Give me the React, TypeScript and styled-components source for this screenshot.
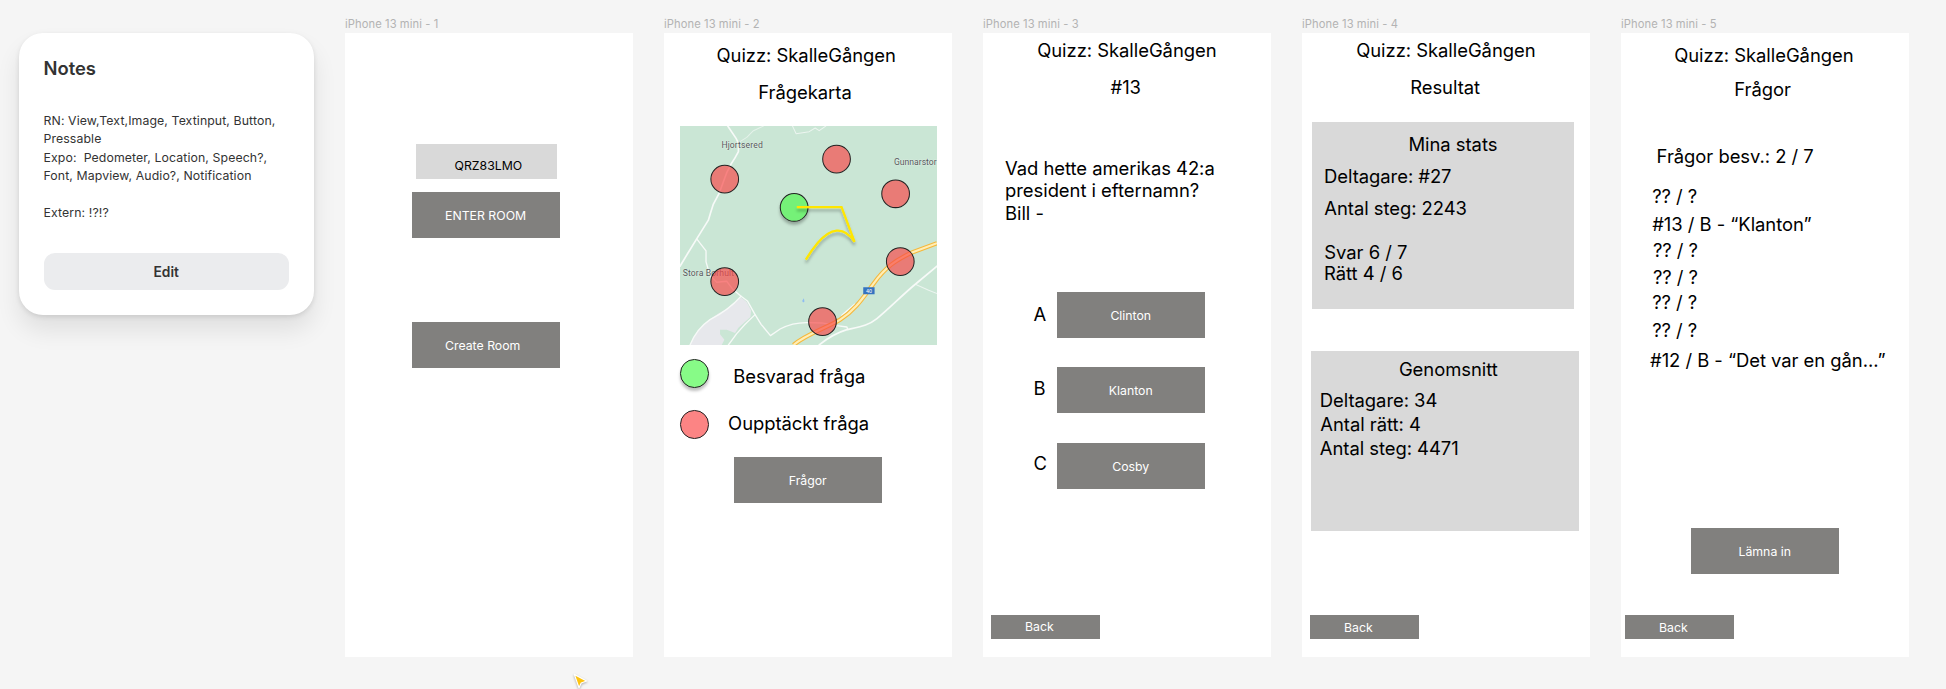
import React from "react";
import styled, { createGlobalStyle, css } from "styled-components";

const GlobalStyle = createGlobalStyle`
  *, *::before, *::after { box-sizing: border-box; }
  html, body { margin: 0; background: #f5f5f5; }
  body { font-family: Inter, "Liberation Sans", sans-serif; color: #000; overflow: hidden; }
  button { font: inherit; border: 0; padding: 0; margin: 0; }
  h1, h2, p { margin: 0; font-weight: 400; }
`;

const Canvas = styled.main`
  display: flex;
  align-items: flex-start;
  width: 1946px;
  height: 689px;
  padding-left: 19px;
  background: #f5f5f5;
  overflow: hidden;
`;

const NotesCard = styled.section`
  flex: none;
  width: 295px;
  height: 282px;
  margin: 33px 31px 0 0;
  padding: 24px 25px 25px 24.5px;
  display: flex;
  flex-direction: column;
  border-radius: 24px;
  background: #fff;
  color: #333;
  box-shadow: 0 15px 24px rgba(0, 0, 0, 0.09), 0 2px 5px rgba(0, 0, 0, 0.1);
`;

const NotesTitle = styled.h1`
  font-size: 18.4px;
  font-weight: 600;
  line-height: 22px;
`;

const NotesBody = styled.p`
  margin-top: 33px;
  font-size: 12.3px;
  line-height: 18.45px;
  letter-spacing: 0.1px;
  white-space: pre;
`;

const EditButton = styled.button`
  height: 37px;
  margin-top: auto;
  border-radius: 11px;
  background: #ebecee;
  color: #333;
  font-size: 13.8px;
  font-weight: 600;
`;

const FrameColumn = styled.section`
  flex: none;
  width: 288px;
  margin-right: 31px;
`;

const FrameLabel = styled.div`
  height: 33px;
  padding-top: 17px;
  color: #b3b3b3;
  font-size: 11.2px;
  letter-spacing: 0.08px;
  line-height: 14px;
  white-space: nowrap;
`;

const Screen = styled.div`
  display: flex;
  flex-direction: column;
  align-items: flex-start;
  width: 288px;
  height: 624px;
  background: #fff;
`;

const Line = styled.p<{ $x: number; $gap?: number }>`
  margin: ${(p) => p.$gap ?? 0}px 0 0 ${(p) => p.$x}px;
  font-size: 18.43px;
  font-weight: 380;
  letter-spacing: -0.04px;
  line-height: 22px;
  white-space: pre;
`;

const Question = styled(Line)`
  line-height: 22.33px;
`;

const RoomInput = styled.div`
  width: 141px;
  height: 35px;
  margin: 111px 0 13px 71px;
  padding: 14px 0 0 38.5px;
  background: #d9d9d9;
  font-size: 12.3px;
  font-weight: 370;
  line-height: 15px;
`;

const ActionButton = styled.button<{ $x?: number; $gap?: number; $textX?: number }>`
  flex: none;
  display: flex;
  align-items: center;
  justify-content: center;
  width: 148.5px;
  height: 46px;
  padding-top: 1px;
  margin: ${(p) => p.$gap ?? 0}px 0 0 ${(p) => p.$x ?? 0}px;
  background: #81807e;
  color: #fff;
  font-size: 12.3px;
  font-weight: 370;
  line-height: 15px;
  ${(p) =>
    p.$textX !== undefined &&
    css`
      justify-content: flex-start;
      padding-left: ${p.$textX}px;
    `}
`;

const BackButton = styled(ActionButton)`
  width: 109px;
  height: 24px;
  padding: 0 0 0 34px;
  justify-content: flex-start;
`;

const AnswerRow = styled.div<{ $gap: number }>`
  display: flex;
  align-items: flex-start;
  margin: ${(p) => p.$gap}px 0 0 50.5px;
`;

const AnswerLetter = styled.span<{ $drop: number }>`
  width: 23px;
  padding-top: ${(p) => p.$drop}px;
  font-size: 18.43px;
  font-weight: 380;
  line-height: 22px;
`;

const Panel = styled.div<{ $x: number; $gap: number; $w: number; $h: number }>`
  flex: none;
  display: flex;
  flex-direction: column;
  align-items: flex-start;
  width: ${(p) => p.$w}px;
  height: ${(p) => p.$h}px;
  margin: ${(p) => p.$gap}px 0 0 ${(p) => p.$x}px;
  background: #d9d9d9;
`;

const MapPicture = styled.svg`
  flex: none;
  display: block;
  width: 257px;
  height: 219px;
  margin: 23px 0 0 16px;
`;

const LegendRow = styled.div<{ $gap: number }>`
  display: flex;
  align-items: flex-start;
  height: 28px;
  margin: ${(p) => p.$gap}px 0 0 16px;
`;

const LegendDot = styled.span<{ $color: string; $raised?: boolean }>`
  flex: none;
  width: 28.5px;
  height: 28.5px;
  border: 1px solid #222;
  border-radius: 50%;
  background: ${(p) => p.$color};
  box-shadow: ${(p) => (p.$raised ? "0 3px 3px rgba(0,0,0,.25)" : "none")};
`;

const Cursor = styled.svg`
  position: absolute;
  left: 570px;
  top: 671px;
  width: 20px;
  height: 20px;
  filter: drop-shadow(0 1px 1px rgba(0, 0, 0, 0.3));
`;

const NOTES = `RN: View,Text,Image, Textinput, Button,
Pressable
Expo:  Pedometer, Location, Speech?,
Font, Mapview, Audio?, Notification

Extern: !?!?`;

const PINS = [
  [209, 537],
  [544, 477],
  [721, 581],
  [735, 784],
  [209, 844],
  [502, 964],
];

function QuizMap() {
  return (
    <MapPicture viewBox="75 378 770 656" preserveAspectRatio="none">
      <defs>
        <filter id="lift" x="-30%" y="-30%" width="160%" height="170%">
          <feDropShadow dx="0" dy="9" stdDeviation="4.5" floodColor="#000" floodOpacity="0.28" />
        </filter>
      </defs>
      <rect x="75" y="378" width="770" height="656" fill="#cae6d5" />
      <path
        d="M105 1034 C125 990 150 965 190 940 C220 925 240 905 258 892 L275 905 L288 930 L286 950 L250 982 L240 998 L215 988 L195 988 L195 1002 L208 1018 L200 1034Z"
        fill="#e7e8ec"
      />
      <g fill="none" stroke="#f7faf8" strokeLinejoin="round" strokeLinecap="round">
        <path
          strokeWidth="5"
          d="M218 378 L243 415 Q252 428 250 445 L250 455 Q240 475 228 492 L215 518 L205 545 L193 578 L175 612 L166 640 L160 660 L125 716 L98 760 L75 798"
        />
        <path
          strokeWidth="4"
          d="M125 716 L153 752 L153 785 L165 826 L185 846 L215 843 L232 866 L258 888 L277 902 L300 943 L318 972 L346 1006 L375 986 C400 973 430 966 460 967 L500 968 L545 976 L575 980 L578 988"
        />
        <path strokeWidth="4" d="M105 1034 Q125 985 165 958 Q220 930 258 888" />
        <path strokeWidth="4" d="M220 1034 L245 1000 L270 972 L300 943" />
        <path
          strokeWidth="5"
          d="M492 1034 Q530 1002 575 988 C620 978 640 975 665 955 C705 922 740 885 780 852 L845 798"
        />
        <path strokeWidth="3" opacity=".75" d="M780 852 L820 870 L845 880" />
        <path strokeWidth="3" opacity=".6" d="M250 428 L275 412 L295 392 L325 378" />
        <path strokeWidth="3" opacity=".75" d="M412 378 L423 401 L462 395 L480 384 L492 392 L512 378" />
        <path strokeWidth="4" d="M560 945 L598 912" />
      </g>
      <path
        d="M415 1034 C455 1000 510 985 555 958 C600 930 625 890 655 850 C690 802 720 780 770 757 L845 729"
        fill="none"
        stroke="#f5b83d"
        strokeWidth="13"
      />
      <path
        d="M415 1034 C455 1000 510 985 555 958 C600 930 625 890 655 850 C690 802 720 780 770 757 L845 729"
        fill="none"
        stroke="#ffeeb5"
        strokeWidth="6.5"
      />
      <path d="M441 902 L446 894 L448 904 L444 907Z" fill="#8ebcf2" />
      <rect x="624" y="861" width="34" height="21" fill="#3573c0" />
      <text x="641" y="877" fontSize="16" fontFamily="Roboto, sans-serif" fill="#fff" textAnchor="middle">
        40
      </text>
      <g
        fontFamily="Roboto, sans-serif"
        fontSize="26"
        fill="#55585a"
        stroke="#e4f2ea"
        strokeWidth="2"
        paintOrder="stroke"
      >
        <text x="199" y="443" textLength="124">Hjortsered</text>
        <text x="716" y="494" textLength="128">Gunnarstor</text>
        <text x="83" y="828" textLength="154">Stora Borhult</text>
      </g>
      {PINS.map(([cx, cy]) => (
        <circle
          key={`${cx}-${cy}`}
          cx={cx}
          cy={cy}
          r="41.5"
          fill="#f84848"
          fillOpacity="0.68"
          stroke="#222"
          strokeWidth="3"
        />
      ))}
      <circle cx="417" cy="622" r="41.5" fill="#74f178" stroke="#222" strokeWidth="3" filter="url(#lift)" />
      <path
        d="M425 621 L559 621 L598 725 C565 675 525 685 488 728 Q468 752 452 778"
        fill="none"
        stroke="#ffe600"
        strokeWidth="7"
        filter="url(#lift)"
      />
    </MapPicture>
  );
}

function Phone({ n, children }: { n: number; children: React.ReactNode }) {
  return (
    <FrameColumn>
      <FrameLabel>iPhone 13 mini - {n}</FrameLabel>
      <Screen>{children}</Screen>
    </FrameColumn>
  );
}

export default function App() {
  return (
    <>
      <GlobalStyle />
      <Canvas>
        <NotesCard>
          <NotesTitle>Notes</NotesTitle>
          <NotesBody>{NOTES}</NotesBody>
          <EditButton>Edit</EditButton>
        </NotesCard>

        <Phone n={1}>
          <RoomInput>QRZ83LMO</RoomInput>
          <ActionButton $x={66.5} $textX={33.5}>ENTER ROOM</ActionButton>
          <ActionButton $x={66.5} $gap={84} $textX={33.5}>Create Room</ActionButton>
        </Phone>

        <Phone n={2}>
          <Line $x={52.5} $gap={11}>Quizz: SkalleGången</Line>
          <Line $x={94.3} $gap={15}>Frågekarta</Line>
          <QuizMap />
          <LegendRow $gap={14}>
            <LegendDot $color="#87fb87" $raised />
            <Line $x={24.7} $gap={6}>Besvarad fråga</Line>
          </LegendRow>
          <LegendRow $gap={23}>
            <LegendDot $color="#fc8484" />
            <Line $x={19.6} $gap={2}>Oupptäckt fråga</Line>
          </LegendRow>
          <ActionButton $x={69.5} $gap={19}>Frågor</ActionButton>
        </Phone>

        <Phone n={3}>
          <Line $x={54.2} $gap={6}>Quizz: SkalleGången</Line>
          <Line $x={127.5} $gap={15}>#13</Line>
          <Question $x={22} $gap={59}>{"Vad hette amerikas 42:a\npresident i efternamn?\nBill -"}</Question>
          <AnswerRow $gap={68}>
            <AnswerLetter $drop={11}>A</AnswerLetter>
            <ActionButton>Clinton</ActionButton>
          </AnswerRow>
          <AnswerRow $gap={29}>
            <AnswerLetter $drop={10}>B</AnswerLetter>
            <ActionButton>Klanton</ActionButton>
          </AnswerRow>
          <AnswerRow $gap={30}>
            <AnswerLetter $drop={9}>C</AnswerLetter>
            <ActionButton>Cosby</ActionButton>
          </AnswerRow>
          <BackButton $x={8} $gap={126}>Back</BackButton>
        </Phone>

        <Phone n={4}>
          <Line $x={54.2} $gap={6}>Quizz: SkalleGången</Line>
          <Line $x={108.2} $gap={15}>Resultat</Line>
          <Panel $x={10} $gap={24} $w={262} $h={187}>
            <Line $x={96.5} $gap={11}>Mina stats</Line>
            <Line $x={12} $gap={10}>Deltagare: #27</Line>
            <Line $x={12.3} $gap={10}>Antal steg: 2243</Line>
            <Line $x={12.3} $gap={22}>Svar 6 / 7</Line>
            <Line $x={12} $gap={-1}>Rätt 4 / 6</Line>
          </Panel>
          <Panel $x={9} $gap={42} $w={268} $h={180}>
            <Line $x={87.9} $gap={7}>Genomsnitt</Line>
            <Line $x={8.8} $gap={9}>Deltagare: 34</Line>
            <Line $x={9.3} $gap={2}>Antal rätt: 4</Line>
            <Line $x={8.8} $gap={2}>Antal steg: 4471</Line>
          </Panel>
          <BackButton $x={8} $gap={84}>Back</BackButton>
        </Phone>

        <Phone n={5}>
          <Line $x={53.2} $gap={11}>Quizz: SkalleGången</Line>
          <Line $x={113.3} $gap={12}>Frågor</Line>
          <Line $x={35.6} $gap={45}>Frågor besv.: 2 / 7</Line>
          <Line $x={31.2} $gap={18}>?? / ?</Line>
          <Line $x={31.2} $gap={6}>#13 / B - “Klanton”</Line>
          <Line $x={31.9} $gap={4}>?? / ?</Line>
          <Line $x={31.9} $gap={5}>?? / ?</Line>
          <Line $x={31.2} $gap={3}>?? / ?</Line>
          <Line $x={31.2} $gap={6}>?? / ?</Line>
          <Line $x={29} $gap={8}>#12 / B - “Det var en gån...”</Line>
          <ActionButton $x={69.5} $gap={157}>Lämna in</ActionButton>
          <BackButton $x={4} $gap={41}>Back</BackButton>
        </Phone>

        <Cursor viewBox="0 0 20 20">
          <path
            d="M4.3 3.4 L16.6 10 L11.2 12 L9 16.8 Z"
            fill="#fdc30f"
            stroke="#fff"
            strokeWidth="1.2"
            strokeLinejoin="round"
          />
        </Cursor>
      </Canvas>
    </>
  );
}
